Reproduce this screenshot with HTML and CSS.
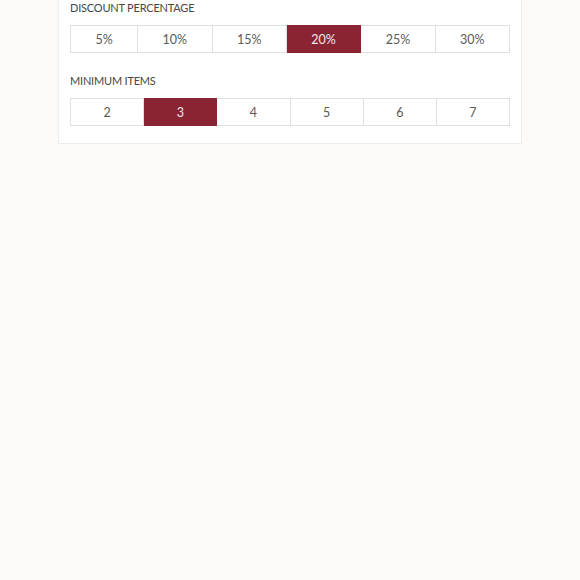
FILE: index.html
```
<!DOCTYPE html>
<html>
<head>
<meta charset="utf-8">
<link rel="stylesheet" href="styles.css">
</head>
<body>
<div class="card">
  <div class="field">
    <div class="label">DISCOUNT PERCENTAGE</div>
    <div class="seg">
      <button class="opt">5%</button>
      <button class="opt">10%</button>
      <button class="opt">15%</button>
      <button class="opt active">20%</button>
      <button class="opt">25%</button>
      <button class="opt">30%</button>
    </div>
  </div>
  <div class="field">
    <div class="label">MINIMUM ITEMS</div>
    <div class="seg">
      <button class="opt">2</button>
      <button class="opt active">3</button>
      <button class="opt">4</button>
      <button class="opt">5</button>
      <button class="opt">6</button>
      <button class="opt">7</button>
    </div>
  </div>
</div>
</body>
</html>
```
FILE: styles.css
```
html, body {
  margin: 0;
  padding: 0;
  background: #fcf9f9;
  font-family: "Lato", "Liberation Sans", sans-serif;
}

.card {
  box-sizing: border-box;
  width: 464px;
  margin: -12px auto 0;
  padding: 11px 11px 17px;
  background: #ffffff;
  border: 1px solid #f1ecec;
}

.field + .field {
  margin-top: 20px;
}

.label {
  font-size: 11px;
  line-height: 16px;
  color: #474747;
  margin-bottom: 9px;
  letter-spacing: -0.2px;
}

.seg {
  display: flex;
}

.opt {
  flex: 1 1 auto;
  height: 28px;
  margin: 0;
  padding: 0;
  border: 1px solid #e0e0e0;
  background: #ffffff;
  color: #5a5a5a;
  font-family: inherit;
  font-size: 12.5px;
  cursor: pointer;
}

.opt + .opt {
  border-left: none;
}

.opt.active {
  background: #8a2433;
  border-color: #8a2433;
  color: #f6e6e8;
}
```
